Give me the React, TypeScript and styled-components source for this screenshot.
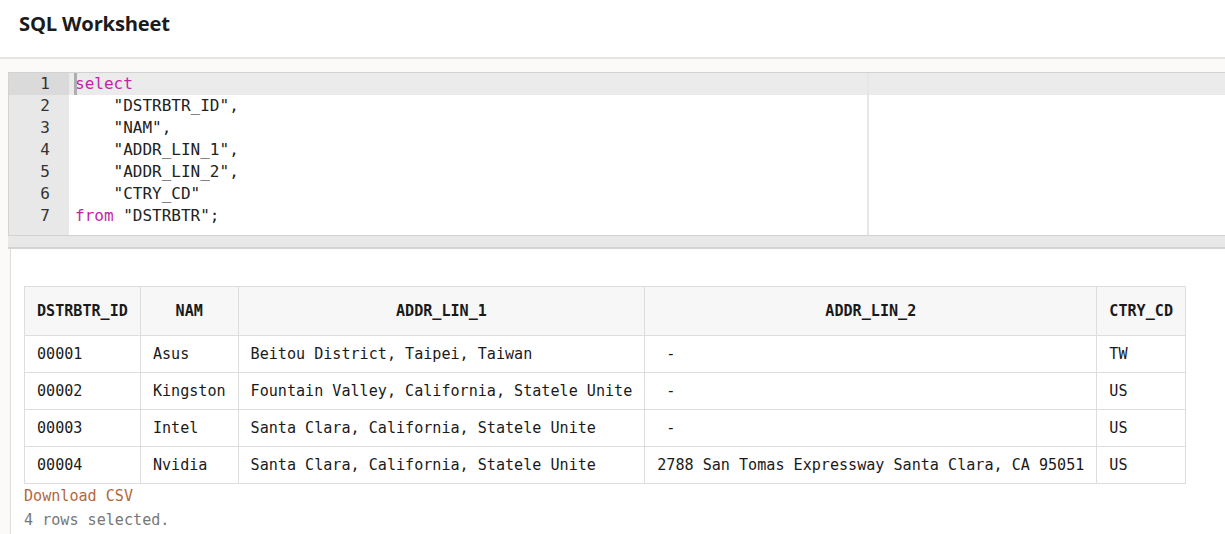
import React from 'react';
import styled, { createGlobalStyle } from 'styled-components';

const GlobalStyle = createGlobalStyle`
  html, body {
    margin: 0;
    padding: 0;
    background: #fbfaf8;
    overflow: hidden;
  }
`;

const Page = styled.div`
  width: 1225px;
  height: 534px;
  display: flex;
  flex-direction: column;
  background: #fbfaf8;
  overflow: hidden;
`;

const Header = styled.header`
  height: 59px;
  flex: none;
  display: flex;
  align-items: center;
  padding: 0 19px;
  box-sizing: border-box;
  background: #ffffff;
  border-bottom: 2px solid #e6e5e3;
`;

const Title = styled.h1`
  margin: 0 0 11px;
  font-family: 'Open Sans', 'Noto Sans', sans-serif;
  font-size: 20.2px;
  font-weight: 700;
  color: #1b1b1b;
  letter-spacing: -0.2px;
`;

const Body = styled.div`
  flex: 1;
  display: flex;
  flex-direction: column;
  padding: 13px 0 0 8px;
  min-height: 0;
`;

const Editor = styled.div`
  display: flex;
  height: 164px;
  flex: none;
  background: #ffffff;
  border: 1px solid #d2d2d2;
  border-right: none;
  box-sizing: border-box;
  font-family: 'DejaVu Sans Mono', 'Liberation Mono', monospace;
  font-size: 16px;
  line-height: 22px;
  color: #222;
`;

const Gutter = styled.div`
  width: 60px;
  flex: none;
  background: #e8e8e8;
  color: #333;
`;

const GutterCell = styled.div<{ $active?: boolean }>`
  height: 22px;
  padding-right: 19px;
  text-align: right;
  background: ${({ $active }) => ($active ? '#dadada' : 'transparent')};
`;

const Code = styled.div`
  flex: 1;
  position: relative;
`;

const CodeLine = styled.div<{ $active?: boolean }>`
  height: 22px;
  padding-left: 6px;
  white-space: pre;
  background: ${({ $active }) => ($active ? '#ebebeb' : 'transparent')};
`;

const Cursor = styled.span`
  position: absolute;
  left: 5px;
  top: 0;
  width: 3px;
  height: 22px;
  background: #aeaeae;
`;

const PrintMargin = styled.span`
  position: absolute;
  left: 798px;
  top: 0;
  bottom: 0;
  width: 2px;
  background: #e6e6e6;
`;

const Keyword = styled.span`
  color: #c61fab;
`;

const Splitter = styled.div`
  height: 13px;
  flex: none;
  background: #e8e8e8;
  border-bottom: 2px solid #d4d4d4;
  box-sizing: border-box;
`;

const Results = styled.div`
  flex: 1;
  margin-left: 2px;
  background: #ffffff;
  border-left: 1px solid #dcdcdc;
  padding: 37px 0 0 13px;
  font-family: 'DejaVu Sans Mono', 'Liberation Mono', monospace;
  font-size: 15.1px;
  color: #1a1a1a;
`;

const Table = styled.table`
  border-collapse: collapse;
`;

const Th = styled.th`
  padding: 15px 12px;
  line-height: 18px;
  font-weight: 700;
  text-align: center;
  background: #f7f7f7;
  border: 1px solid #dddddd;
  white-space: pre;
`;

const Td = styled.td`
  padding: 9px 12px;
  line-height: 18px;
  border: 1px solid #dddddd;
  white-space: pre;
`;

const DownloadLink = styled.a`
  display: block;
  line-height: 24px;
  color: #b3683c;
  text-decoration: none;
  cursor: pointer;
`;

const Status = styled.div`
  line-height: 24px;
  color: #777777;
`;

const codeLines: React.ReactNode[] = [
  <Keyword>select</Keyword>,
  '    "DSTRBTR_ID",',
  '    "NAM",',
  '    "ADDR_LIN_1",',
  '    "ADDR_LIN_2",',
  '    "CTRY_CD"',
  <>
    <Keyword>from</Keyword> "DSTRBTR";
  </>,
];

const columns = ['DSTRBTR_ID', 'NAM', 'ADDR_LIN_1', 'ADDR_LIN_2', 'CTRY_CD'];

const rows = [
  ['00001', 'Asus', 'Beitou District, Taipei, Taiwan', ' -', 'TW'],
  ['00002', 'Kingston', 'Fountain Valley, California, Statele Unite', ' -', 'US'],
  ['00003', 'Intel', 'Santa Clara, California, Statele Unite', ' -', 'US'],
  ['00004', 'Nvidia', 'Santa Clara, California, Statele Unite', '2788 San Tomas Expressway Santa Clara, CA 95051', 'US'],
];

export default function App() {
  return (
    <Page>
      <GlobalStyle />
      <Header>
        <Title>SQL Worksheet</Title>
      </Header>
      <Body>
        <Editor>
          <Gutter>
            {codeLines.map((_, i) => (
              <GutterCell key={i} $active={i === 0}>
                {i + 1}
              </GutterCell>
            ))}
          </Gutter>
          <Code>
            {codeLines.map((line, i) => (
              <CodeLine key={i} $active={i === 0}>
                {line}
              </CodeLine>
            ))}
            <Cursor />
            <PrintMargin />
          </Code>
        </Editor>
        <Splitter />
        <Results>
          <Table>
            <thead>
              <tr>
                {columns.map((c) => (
                  <Th key={c}>{c}</Th>
                ))}
              </tr>
            </thead>
            <tbody>
              {rows.map((r) => (
                <tr key={r[0]}>
                  {r.map((cell, j) => (
                    <Td key={j}>{cell}</Td>
                  ))}
                </tr>
              ))}
            </tbody>
          </Table>
          <DownloadLink>Download CSV</DownloadLink>
          <Status>4 rows selected.</Status>
        </Results>
      </Body>
    </Page>
  );
}
